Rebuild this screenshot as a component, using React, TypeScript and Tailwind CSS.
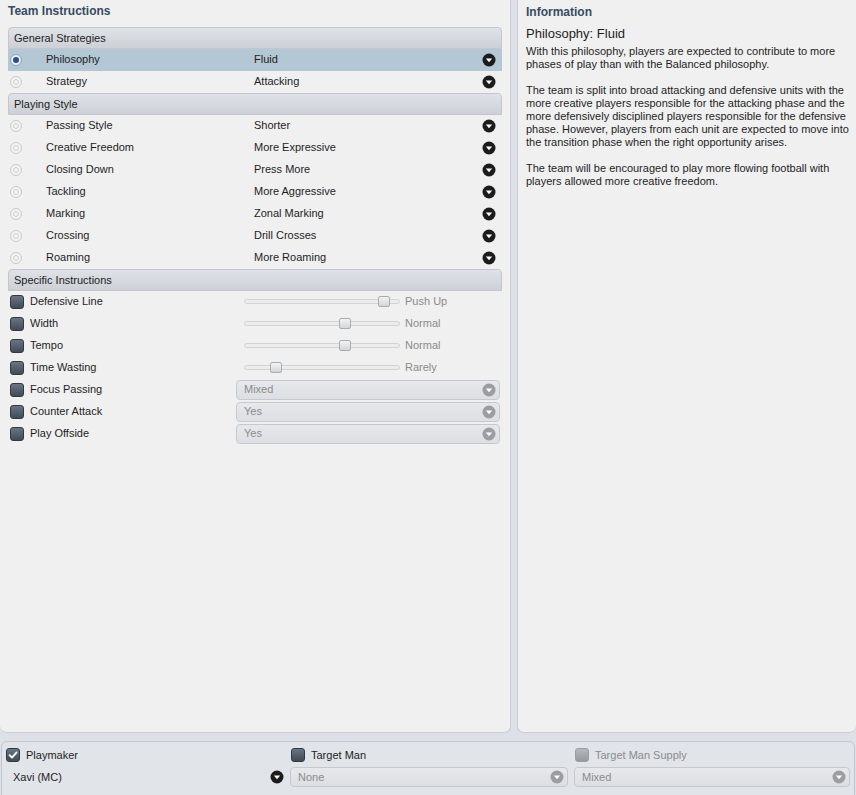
import React from 'react'

const FONT = { fontFamily: '"Liberation Sans", Arial, sans-serif' }

const GENERAL = [
  { label: 'Philosophy', value: 'Fluid', active: true },
  { label: 'Strategy', value: 'Attacking' },
]

const STYLE = [
  { label: 'Passing Style', value: 'Shorter' },
  { label: 'Creative Freedom', value: 'More Expressive' },
  { label: 'Closing Down', value: 'Press More' },
  { label: 'Tackling', value: 'More Aggressive' },
  { label: 'Marking', value: 'Zonal Marking' },
  { label: 'Crossing', value: 'Drill Crosses' },
  { label: 'Roaming', value: 'More Roaming' },
]

const SLIDERS = [
  { label: 'Defensive Line', value: 'Push Up', pos: 139 },
  { label: 'Width', value: 'Normal', pos: 100 },
  { label: 'Tempo', value: 'Normal', pos: 100 },
  { label: 'Time Wasting', value: 'Rarely', pos: 31 },
]

const SELECTS = [
  { label: 'Focus Passing', value: 'Mixed' },
  { label: 'Counter Attack', value: 'Yes' },
  { label: 'Play Offside', value: 'Yes' },
]

function DropIcon({ dim }: { dim?: boolean }) {
  return (
    <svg width="14" height="14" viewBox="0 0 14 14" className="shrink-0">
      <circle cx="7" cy="7" r="6.5" fill={dim ? '#9a9da2' : '#1c1c1c'} />
      <path d="M3.8 5.4 H10.2 L7 9.2 Z" fill="#fff" />
    </svg>
  )
}

function Radio({ on }: { on?: boolean }) {
  return on ? (
    <span className="flex h-[12px] w-[12px] items-center justify-center rounded-full border border-[#8da3b5] bg-[#e8eef3]">
      <span className="h-[6px] w-[6px] rounded-full bg-[#2a4f8f]" />
    </span>
  ) : (
    <span className="flex h-[12px] w-[12px] items-center justify-center rounded-full border border-[#c9c9c9] bg-[#f4f4f4]">
      <span className="h-[6px] w-[6px] rounded-full border border-[#cfcfcf]" />
    </span>
  )
}

function Check({ checked, dim }: { checked?: boolean; dim?: boolean }) {
  return (
    <span
      className={`flex h-[14px] w-[14px] shrink-0 items-center justify-center rounded-[3px] border ${
        dim
          ? 'border-[#9a9da2] bg-gradient-to-b from-[#b4b7bb] to-[#96999d]'
          : 'border-[#2f3a46] bg-gradient-to-b from-[#6a7683] to-[#404b57]'
      }`}
    >
      {checked && (
        <svg width="10" height="10" viewBox="0 0 10 10">
          <path d="M1.6 5.2 L4 7.6 L8.6 2.4" fill="none" stroke="#fff" strokeWidth="1.8" strokeLinecap="round" strokeLinejoin="round" />
        </svg>
      )}
    </span>
  )
}

function SectionHeader({ title }: { title: string }) {
  return (
    <div className="flex h-[22px] items-center rounded-t-[4px] border border-[#c3c7cd] bg-gradient-to-b from-[#dfe2e6] to-[#cdd1d7] px-[5px] text-[11px] text-[#222]">
      {title}
    </div>
  )
}

function OptionRow({ label, value, active }: { label: string; value: string; active?: boolean }) {
  return (
    <div className={`flex h-[22px] items-center pb-[1px] text-[11px] text-[#1e1e1e] ${active ? 'bg-[#b3c7d5]' : ''}`}>
      <span className="flex w-[38px] justify-start pl-[2px]">
        <Radio on={active} />
      </span>
      <span className="w-[208px]">{label}</span>
      <span className="flex-1">{value}</span>
      <span className="pr-[6px]">
        <DropIcon />
      </span>
    </div>
  )
}

function SliderRow({ label, value, pos }: { label: string; value: string; pos: number }) {
  return (
    <div className="flex h-[22px] items-center pb-[1px] text-[11px]">
      <span className="pl-[2px] pr-[6px]">
        <Check />
      </span>
      <span className="w-[214px] text-[#1e1e1e]">{label}</span>
      <div className="relative h-[5px] w-[156px] rounded-full border border-[#d3d3d3] bg-[#ececec]">
        <span
          className="absolute top-[-4px] h-[11px] w-[12px] rounded-[2px] border border-[#a9acb0] bg-gradient-to-b from-[#f4f4f4] to-[#d3d5d8]"
          style={{ left: pos - 6 }}
        />
      </div>
      <span className="pl-[5px] text-[#8b8b8b]">{value}</span>
    </div>
  )
}

function Select({ value, className = '' }: { value: string; className?: string }) {
  return (
    <div className={`flex h-[20px] items-center justify-between rounded-[4px] border border-[#c5c9ce] bg-gradient-to-b from-[#e6e8eb] to-[#dcdfe3] pl-[7px] pr-[3px] text-[11px] text-[#8b8b8b] ${className}`}>
      <span>{value}</span>
      <DropIcon dim />
    </div>
  )
}

function SelectRow({ label, value }: { label: string; value: string }) {
  return (
    <div className="flex h-[22px] items-center pb-[1px] text-[11px]">
      <span className="pl-[2px] pr-[6px]">
        <Check />
      </span>
      <span className="w-[206px] text-[#1e1e1e]">{label}</span>
      <Select value={value} className="w-[264px]" />
    </div>
  )
}

export default function App() {
  return (
    <div className="flex h-[795px] w-[856px] flex-col overflow-hidden bg-[#dde1e7]" style={FONT}>
      <div className="flex h-[733px] shrink-0 gap-[6px]">
        {/* Team Instructions */}
        <div className="w-[511px] rounded-b-[7px] border-r border-b border-[#c9cdd3] bg-[#f0f0f0] px-[8px]">
          <h1 className="flex h-[27px] items-center pb-[5px] text-[12px] font-bold text-[#354b5f]">Team Instructions</h1>
          <div className="w-[494px]">
            <SectionHeader title="General Strategies" />
            {GENERAL.map(r => <OptionRow key={r.label} {...r} />)}
            <SectionHeader title="Playing Style" />
            {STYLE.map(r => <OptionRow key={r.label} {...r} />)}
            <SectionHeader title="Specific Instructions" />
            {SLIDERS.map(r => <SliderRow key={r.label} {...r} />)}
            {SELECTS.map(r => <SelectRow key={r.label} {...r} />)}
          </div>
        </div>

        {/* Information */}
        <div className="flex-1 rounded-b-[7px] border-l border-b border-[#c9cdd3] bg-[#f0f0f0] pl-[8px] pr-[2px] text-[#1e1e1e]">
          <h2 className="flex h-[23px] items-center text-[12px] font-bold text-[#354b5f]">Information</h2>
          <p className="mt-[2px] text-[13px] leading-[18px]">Philosophy: Fluid</p>
          <div className="mt-[2px] space-y-[13px] text-[11px] leading-[13px]">
            <p>With this philosophy, players are expected to contribute to more phases of play than with the Balanced philosophy.</p>
            <p>
              The team is split into broad attacking and defensive units with the more creative players responsible for the attacking phase and the
              more defensively disciplined players responsible for the defensive phase. However, players from each unit are expected to move into
              the transition phase when the right opportunity arises.
            </p>
            <p>The team will be encouraged to play more flowing football with players allowed more creative freedom.</p>
          </div>
        </div>
      </div>

      {/* Bottom bar */}
      <div className="mx-[1px] mt-[8px] grid h-[60px] shrink-0 grid-cols-[284px_284px_1fr] rounded-[6px] border border-[#c3c7cd] bg-[#e1e4e9] px-[4px] pt-[5px] text-[11px]">
        <div className="flex flex-col gap-[4px]">
          <div className="flex h-[16px] items-center gap-[6px]">
            <Check checked />
            <span className="text-[#1e1e1e]">Playmaker</span>
          </div>
          <div className="flex h-[20px] items-center justify-between pl-[7px] pr-[6px] text-[#1e1e1e]">
            <span>Xavi (MC)</span>
            <DropIcon />
          </div>
        </div>
        <div className="flex flex-col gap-[4px] pr-[6px]">
          <div className="flex h-[16px] items-center gap-[6px] pl-[1px]">
            <Check />
            <span className="text-[#1e1e1e]">Target Man</span>
          </div>
          <Select value="None" />
        </div>
        <div className="flex flex-col gap-[4px]">
          <div className="flex h-[16px] items-center gap-[6px] pl-[1px]">
            <Check dim />
            <span className="text-[#8b8b8b]">Target Man Supply</span>
          </div>
          <Select value="Mixed" />
        </div>
      </div>
    </div>
  )
}
